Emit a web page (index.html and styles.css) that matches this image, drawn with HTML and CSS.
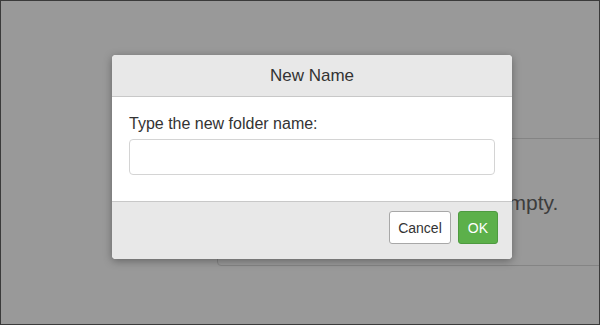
FILE: index.html
```html
<!DOCTYPE html>
<html lang="en">
<head>
    <meta charset="UTF-8">
    <meta name="viewport" content="width=device-width, initial-scale=1.0">
    <title>New Name</title>
    <link rel="stylesheet" href="styles.css">
</head>
<body>
    <div class="screen">
        <div class="files-panel">
            <div class="empty-note">This folder is empty.</div>
        </div>

        <div class="backdrop">
            <div class="dialog">
                <div class="dialog-header">New Name</div>
                <div class="dialog-body">
                    <label class="field-label" for="folder-name">Type the new folder name:</label>
                    <input class="field-input" id="folder-name" type="text">
                </div>
                <div class="dialog-footer">
                    <button class="btn btn-cancel">Cancel</button>
                    <button class="btn btn-ok">OK</button>
                </div>
            </div>
        </div>
    </div>
</body>
</html>
```

FILE: styles.css
```css
* {
    box-sizing: border-box;
}
body {
    margin: 0;
    font-family: "Liberation Sans", Arial, sans-serif;
    color: #333;
    background: #fff;
}
.screen {
    position: relative;
    width: 600px;
    height: 325px;
    border: 1px solid #3a3a3a;
    overflow: hidden;
    background: #fff;
}
.files-panel {
    margin: 137px 0 0 216px;
    width: 420px;
    height: 128px;
    border: 1px solid #ddd;
    border-radius: 4px;
    padding: 52px 0 0 154px;
}
.empty-note {
    font-size: 21px;
    color: #666;
    white-space: nowrap;
}
.backdrop {
    position: absolute;
    inset: 0;
    background: rgba(0, 0, 0, 0.4);
    padding: 54px 0 0 111px;
}
.dialog {
    width: 400px;
    background: #fff;
    border-radius: 4px;
    overflow: hidden;
    box-shadow: 0 2px 8px rgba(0, 0, 0, 0.35);
}
.dialog-header {
    height: 42px;
    background: #e8e8e8;
    border-bottom: 1px solid #c8c8c8;
    text-align: center;
    font-size: 17px;
    line-height: 41px;
}
.dialog-body {
    padding: 17px 17px 26px;
}
.field-label {
    display: block;
    font-size: 16px;
    line-height: 20px;
    margin-bottom: 5px;
}
.field-input {
    display: block;
    width: 100%;
    height: 36px;
    border: 1px solid #d4d4d4;
    border-radius: 4px;
    font: inherit;
    padding: 6px 10px;
}
.dialog-footer {
    background: #e8e8e8;
    border-top: 1px solid #c8c8c8;
    display: flex;
    justify-content: flex-end;
    gap: 7px;
    padding: 9px 14px 15px;
}
.btn {
    height: 33px;
    font-family: inherit;
    font-size: 14px;
    border-radius: 3px;
    border: 1px solid #a8a8a8;
    padding: 0 8px;
}
.btn-cancel {
    background: #fff;
    color: #333;
}
.btn-ok {
    background: #5cb04a;
    border-color: #4e9a40;
    color: #fff;
    padding: 0 9px;
}
```
